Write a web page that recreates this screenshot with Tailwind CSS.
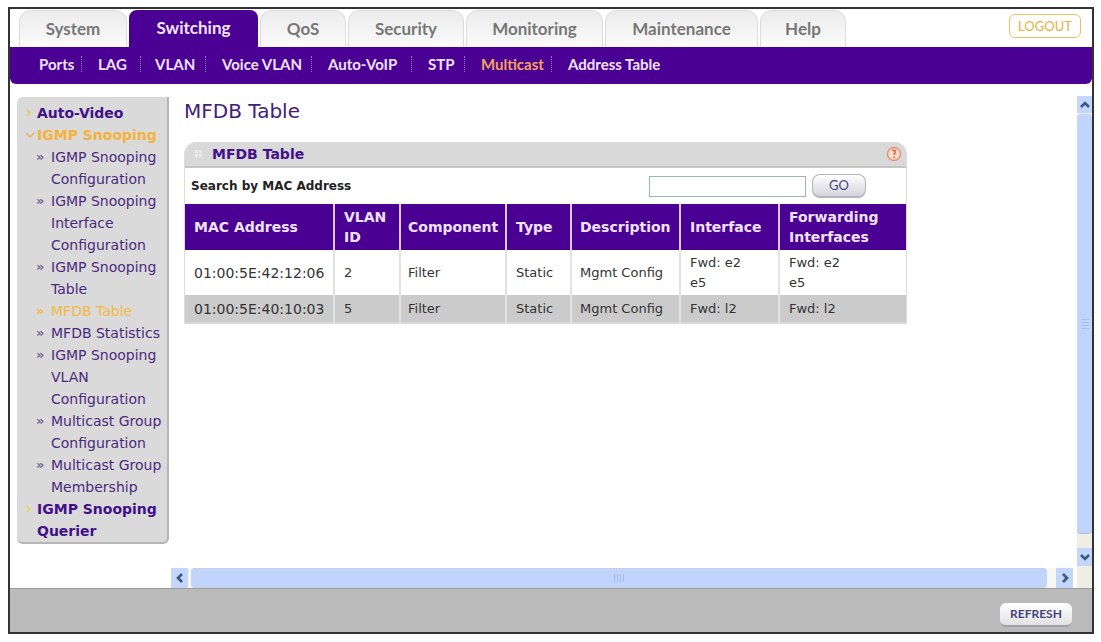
<!DOCTYPE html>
<html lang="en">
<head>
    <meta charset="UTF-8">
    <meta name="viewport" content="width=device-width, initial-scale=1.0">
    <title>MFDB Table</title>
    <script src="https://cdn.jsdelivr.net/npm/@tailwindcss/browser@4"></script>
</head>
<body class="min-h-screen flex bg-white pt-[7px] pb-2 pl-2 pr-[7px] font-['DejaVu_Sans',Verdana,sans-serif] text-sm">
    <div class="flex-1 flex flex-col min-w-0 border-2 border-[#333] bg-white">

        <!-- Main tabs -->
        <header class="flex items-end justify-between pl-[9px] pr-[11px] border-b border-[#4a0093] font-[Lato,sans-serif]">
            <nav aria-label="Main" class="flex gap-[2px] pt-px text-[17px] font-bold text-[#777]">
                <a href="#" class="w-[108px] h-[37px] flex items-center justify-center rounded-t-xl border border-b-0 border-[#dcdcdc] bg-linear-to-b from-[#ececec] to-[#fafafa]">System</a>
                <a href="#" aria-current="page" class="w-[129px] h-[37px] flex items-center justify-center rounded-t-lg bg-[#4a0093] text-[#f3e8fb]">Switching</a>
                <a href="#" class="w-[86px] h-[37px] flex items-center justify-center rounded-t-xl border border-b-0 border-[#dcdcdc] bg-linear-to-b from-[#ececec] to-[#fafafa]">QoS</a>
                <a href="#" class="w-[116px] h-[37px] flex items-center justify-center rounded-t-xl border border-b-0 border-[#dcdcdc] bg-linear-to-b from-[#ececec] to-[#fafafa]">Security</a>
                <a href="#" class="w-[137px] h-[37px] flex items-center justify-center rounded-t-xl border border-b-0 border-[#dcdcdc] bg-linear-to-b from-[#ececec] to-[#fafafa]">Monitoring</a>
                <a href="#" class="w-[153px] h-[37px] flex items-center justify-center rounded-t-xl border border-b-0 border-[#dcdcdc] bg-linear-to-b from-[#ececec] to-[#fafafa]">Maintenance</a>
                <a href="#" class="w-[86px] h-[37px] flex items-center justify-center rounded-t-xl border border-b-0 border-[#dcdcdc] bg-linear-to-b from-[#ececec] to-[#fafafa]">Help</a>
            </nav>
            <button type="button" class="w-[72px] h-6 mb-[9px] rounded-md border border-[#ecc063] text-[13px] text-[#e9b040] bg-white">LOGOUT</button>
        </header>

        <!-- Sub menu -->
        <nav aria-label="Switching" class="h-[36px] flex items-center pb-1 rounded-b-md bg-[#4a0093] pl-[29px] font-[Lato,sans-serif] text-[15px] leading-4 font-bold text-[#eee3f8]">
            <a href="#" class="w-[43px] border-r border-dotted border-[#9a70c8]">Ports</a>
            <a href="#" class="w-[59px] pl-4 border-r border-dotted border-[#9a70c8]">LAG</a>
            <a href="#" class="w-[65px] pl-[14px] border-r border-dotted border-[#9a70c8]">VLAN</a>
            <a href="#" class="w-[106px] pl-4 border-r border-dotted border-[#9a70c8]">Voice VLAN</a>
            <a href="#" class="w-[100px] pl-4 border-r border-dotted border-[#9a70c8]">Auto-VoIP</a>
            <a href="#" class="w-[53px] pl-4 border-r border-dotted border-[#9a70c8]">STP</a>
            <a href="#" aria-current="page" class="w-[87px] pl-4 border-r border-dotted border-[#9a70c8] text-[#f2a35e]">Multicast</a>
            <a href="#" class="pl-4">Address Table</a>
        </nav>

        <div class="flex-1 flex min-h-0">
            <!-- Side menu -->
            <aside class="w-[152px] shrink-0 self-start ml-[7px] mt-[13px] pt-[5px] pl-[9px] rounded-md rounded-tr-none bg-[#dadada] border-r-2 border-b-2 border-[#b5b5b5] text-[#4b2a80] whitespace-nowrap">
                <ul class="font-bold leading-[22px] text-[#42108a]">
                    <li>
                        <a href="#" class="flex">
                            <svg class="w-[11px] h-[22px] shrink-0" viewBox="0 0 11 22" fill="none" stroke="#e8c878" stroke-width="2"><path d="M1 8l3 3-3 3"/></svg>
                            Auto-Video
                        </a>
                    </li>
                    <li>
                        <a href="#" class="flex text-[#f5b23c]">
                            <svg class="w-[11px] h-[22px] shrink-0" viewBox="0 0 11 22" fill="none" stroke="#efae62" stroke-width="1.5"><path d="M0 9l4 4 4-4"/></svg>
                            IGMP Snooping
                        </a>
                        <ul class="pl-[10px] font-normal text-[#4b2a80]">
                            <li><a href="#" class="flex"><span class="w-[15px] shrink-0 text-[13px] font-bold text-[#75678f]">»</span><span>IGMP Snooping<br>Configuration</span></a></li>
                            <li><a href="#" class="flex"><span class="w-[15px] shrink-0 text-[13px] font-bold text-[#75678f]">»</span><span>IGMP Snooping<br>Interface<br>Configuration</span></a></li>
                            <li><a href="#" class="flex"><span class="w-[15px] shrink-0 text-[13px] font-bold text-[#75678f]">»</span><span>IGMP Snooping<br>Table</span></a></li>
                            <li><a href="#" aria-current="page" class="flex text-[#f5b942]"><span class="w-[15px] shrink-0 text-[13px] font-bold">»</span><span>MFDB Table</span></a></li>
                            <li><a href="#" class="flex"><span class="w-[15px] shrink-0 text-[13px] font-bold text-[#75678f]">»</span><span>MFDB Statistics</span></a></li>
                            <li><a href="#" class="flex"><span class="w-[15px] shrink-0 text-[13px] font-bold text-[#75678f]">»</span><span>IGMP Snooping<br>VLAN<br>Configuration</span></a></li>
                            <li><a href="#" class="flex"><span class="w-[15px] shrink-0 text-[13px] font-bold text-[#75678f]">»</span><span>Multicast Group<br>Configuration</span></a></li>
                            <li><a href="#" class="flex"><span class="w-[15px] shrink-0 text-[13px] font-bold text-[#75678f]">»</span><span>Multicast Group<br>Membership</span></a></li>
                        </ul>
                    </li>
                    <li>
                        <a href="#" class="flex">
                            <svg class="w-[11px] h-[22px] shrink-0" viewBox="0 0 11 22" fill="none" stroke="#e6d37a" stroke-width="2"><path d="M1 8l3 3-3 3"/></svg>
                            <span>IGMP Snooping<br>Querier</span>
                        </a>
                    </li>
                </ul>
            </aside>

            <div class="flex-1 flex min-w-0 pl-[2px] pt-3">
                <div class="flex-1 flex flex-col min-w-0">
                    <main class="flex-1 pl-[13px] pt-[3px]">
                        <h1 class="text-xl leading-6 text-[#42207a]">MFDB Table</h1>

                        <section class="w-full max-w-[723px] mt-[19px] border-x border-[#dcdcdc] rounded-t-xl overflow-hidden">
                            <div class="h-[26px] flex items-center justify-between pl-2 pr-1 bg-[#d9d9d9] border-b-2 border-[#c6c6c6]">
                                <div class="flex items-center">
                                    <svg class="w-[19px] h-3" viewBox="0 0 19 12" fill="#ebebeb"><path d="M2 2h3v3H2zM6 2h3v3H6zM2 6h3v3H2zM6 6h3v3H6z"/></svg>
                                    <h2 class="font-bold text-[#42108a]">MFDB Table</h2>
                                </div>
                                <button type="button" aria-label="Help">
                                    <svg class="w-4 h-4" viewBox="0 0 16 16" fill="none" stroke="#e8906a"><circle cx="8" cy="8" r="6.5" fill="#f3ddd2" stroke-width="1.4"/><path d="M6.3 5.2c.6-1.4 3.1-1.3 3.1.5 0 1.3-1.2 1.5-1.2 3.4M8.2 10.6v1.6" stroke="#df7248" stroke-width="1.8"/></svg>
                                </button>
                            </div>
                            <form class="h-9 flex items-center pl-[6px] pr-10">
                                <label for="mac" class="flex-1 text-xs font-bold text-[#222]">Search by MAC Address</label>
                                <input id="mac" type="text" class="w-[157px] h-[21px] border border-[#9ab5bd] bg-white px-1 text-xs">
                                <button type="button" class="w-[54px] h-6 ml-[6px] rounded-lg border border-[#b4b4bc] border-b-2 bg-linear-to-b from-white to-[#d4d4dc] font-[Lato,sans-serif] text-[13px] text-[#44447c]">GO</button>
                            </form>
                            <table class="w-full table-fixed text-left text-[#333]">
                                <colgroup>
                                    <col class="w-[149px]"><col class="w-[66px]"><col class="w-[106px]"><col class="w-[65px]"><col class="w-[109px]"><col class="w-[99px]"><col>
                                </colgroup>
                                <thead class="bg-[#4a0093] leading-5 text-[#eee3f8]">
                                    <tr class="h-[46px]">
                                        <th scope="col" class="pl-[9px] border-r-2 border-[#dccbe8]">MAC Address</th>
                                        <th scope="col" class="pl-[9px] border-r-2 border-[#dccbe8]">VLAN<br>ID</th>
                                        <th scope="col" class="pl-[7px] border-r-2 border-[#dccbe8]">Component</th>
                                        <th scope="col" class="pl-[9px] border-r-2 border-[#dccbe8]">Type</th>
                                        <th scope="col" class="pl-2 border-r-2 border-[#dccbe8]">Description</th>
                                        <th scope="col" class="pl-[9px] border-r-2 border-[#dccbe8]">Interface</th>
                                        <th scope="col" class="pl-[9px]">Forwarding<br>Interfaces</th>
                                    </tr>
                                </thead>
                                <tbody class="text-[13px] leading-5">
                                    <tr class="h-[45px]">
                                        <td class="pl-[9px] border-r-2 border-[#e2e2e2] text-sm">01:00:5E:42:12:06</td>
                                        <td class="pl-[9px] border-r-2 border-[#e2e2e2]">2</td>
                                        <td class="pl-[7px] border-r-2 border-[#e2e2e2]">Filter</td>
                                        <td class="pl-[9px] border-r-2 border-[#e2e2e2]">Static</td>
                                        <td class="pl-2 border-r-2 border-[#e2e2e2]">Mgmt Config</td>
                                        <td class="pl-[9px] border-r-2 border-[#e2e2e2]">Fwd: e2<br>e5</td>
                                        <td class="pl-[9px]">Fwd: e2<br>e5</td>
                                    </tr>
                                    <tr class="h-[28px] bg-[#cbcbcb] border-b-2 border-[#d8d8d8]">
                                        <td class="pl-[9px] border-r-2 border-[#e2e2e2] text-sm">01:00:5E:40:10:03</td>
                                        <td class="pl-[9px] border-r-2 border-[#e2e2e2]">5</td>
                                        <td class="pl-[7px] border-r-2 border-[#e2e2e2]">Filter</td>
                                        <td class="pl-[9px] border-r-2 border-[#e2e2e2]">Static</td>
                                        <td class="pl-2 border-r-2 border-[#e2e2e2]">Mgmt Config</td>
                                        <td class="pl-[9px] border-r-2 border-[#e2e2e2]">Fwd: l2</td>
                                        <td class="pl-[9px]">Fwd: l2</td>
                                    </tr>
                                </tbody>
                            </table>
                        </section>
                    </main>

                    <!-- Horizontal scrollbar -->
                    <div class="h-5 flex items-stretch gap-[3px] bg-[#f6f6f2]">
                        <button type="button" aria-label="Scroll left" class="w-[17px] flex items-center justify-center bg-[#c4d7fa]">
                            <svg class="w-3 h-3" viewBox="0 0 12 12" fill="none" stroke="#3d5685" stroke-width="2.6"><path d="M8 2L4 6l4 4"/></svg>
                        </button>
                        <div class="flex-1 flex items-center justify-center bg-[#c1d4fb] border-y border-[#c9cfe4] rounded-sm">
                            <svg class="w-3 h-2" viewBox="0 0 12 8" stroke="#a3b9e6"><path d="M1.5 0v8M4.5 0v8M7.5 0v8M10.5 0v8"/></svg>
                        </div>
                        <button type="button" aria-label="Scroll right" class="w-[17px] ml-[6px] flex items-center justify-center bg-[#c4d7fa]">
                            <svg class="w-3 h-3" viewBox="0 0 12 12" fill="none" stroke="#3d5685" stroke-width="2.6"><path d="M4 2l4 4-4 4"/></svg>
                        </button>
                    </div>
                </div>

                <!-- Vertical scrollbar -->
                <div class="w-[15px] ml-1 flex flex-col gap-px pb-[22px] bg-[#f0eee4]">
                    <button type="button" aria-label="Scroll up" class="h-[17px] flex items-center justify-center bg-[#c4d7fa]">
                        <svg class="w-3 h-3" viewBox="0 0 12 12" fill="none" stroke="#3d5685" stroke-width="2.6"><path d="M2 8l4-4 4 4"/></svg>
                    </button>
                    <div class="flex-1 flex items-center justify-center bg-[#c1d4fb] border-b border-[#a9bde8] rounded-sm">
                        <svg class="w-2 h-3" viewBox="0 0 8 12" stroke="#a9beea"><path d="M0 1.5h8M0 4.5h8M0 7.5h8M0 10.5h8"/></svg>
                    </div>
                    <button type="button" aria-label="Scroll down" class="h-[18px] mt-[13px] flex items-center justify-center bg-[#c4d7fa]">
                        <svg class="w-3 h-3" viewBox="0 0 12 12" fill="none" stroke="#3d5685" stroke-width="2.6"><path d="M2 4l4 4 4-4"/></svg>
                    </button>
                </div>
            </div>
        </div>

        <footer class="h-[44px] flex items-center justify-end pt-[8px] pr-5 bg-[#bababa] border-t border-[#9c9c9c]">
            <button type="button" class="w-[72px] h-6 rounded-md border-b-2 border-[#a2a2a6] bg-linear-to-b from-white to-[#e2e2e6] font-[Lato,sans-serif] text-xs font-bold text-[#44447c]">REFRESH</button>
        </footer>
    </div>
</body>
</html>
